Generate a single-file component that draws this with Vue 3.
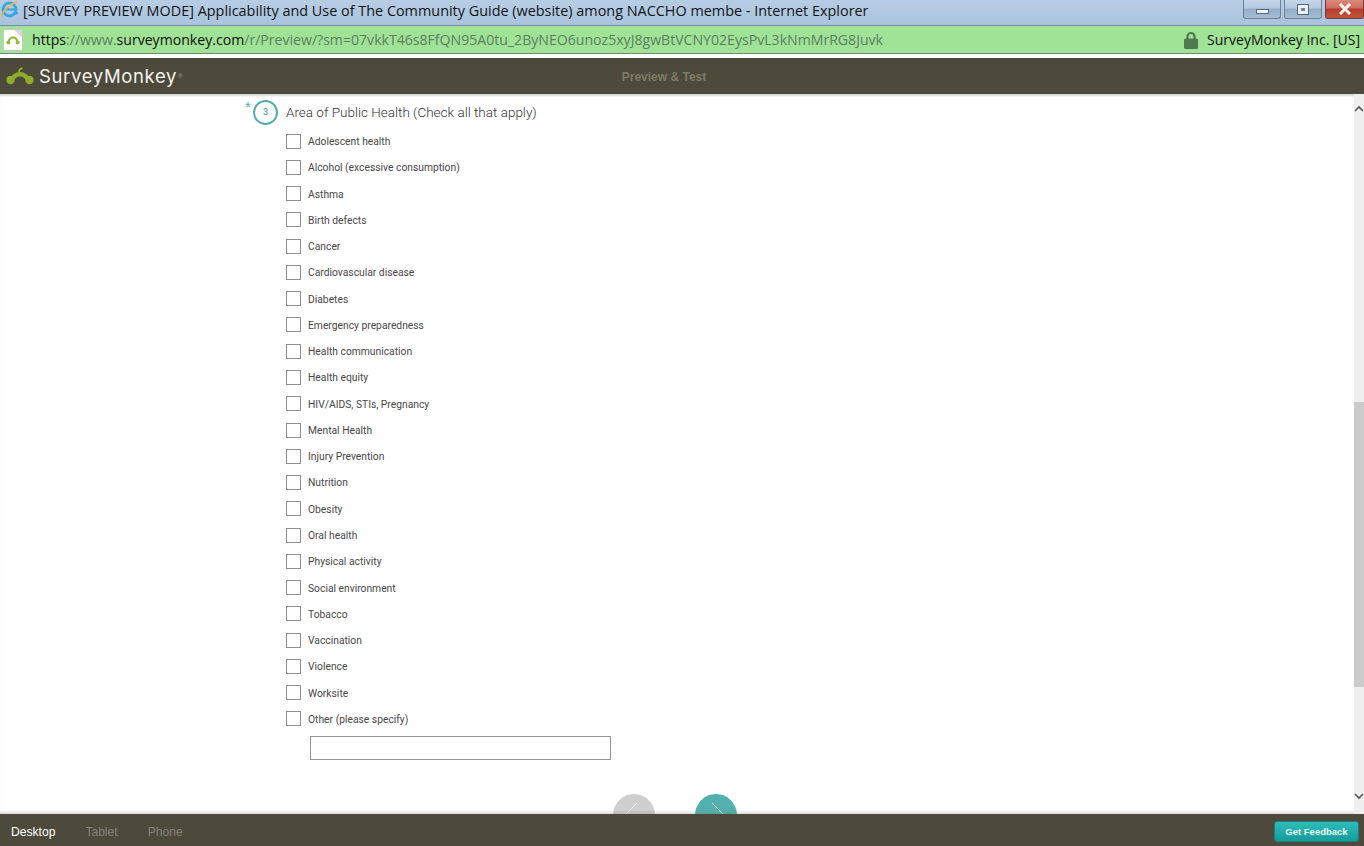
<script setup>
const options = [
  'Adolescent health', 'Alcohol (excessive consumption)', 'Asthma', 'Birth defects', 'Cancer',
  'Cardiovascular disease', 'Diabetes', 'Emergency preparedness', 'Health communication', 'Health equity',
  'HIV/AIDS, STIs, Pregnancy', 'Mental Health', 'Injury Prevention', 'Nutrition', 'Obesity', 'Oral health',
  'Physical activity', 'Social environment', 'Tobacco', 'Vaccination', 'Violence', 'Worksite', 'Other (please specify)'
]
</script>

<template>
  <div class="window">
    <div class="titlebar">
      <svg class="ie" width="19" height="19" viewBox="0 0 20 20">
        <circle cx="10" cy="10" r="6.800" fill="none" stroke="#3aa6e6" stroke-width="3"/>
        <path d="M5 10h11" stroke="#3aa6e6" stroke-width="2.400"/>
        <path d="M1 18c2-6 9-14 17-16" fill="none" stroke="#f0b83a" stroke-width="1.600"/>
        <path d="M15 14.500l4-1" stroke="#3aa6e6" stroke-width="2.400"/>
      </svg>
      <span class="title">[SURVEY PREVIEW MODE] Applicability and Use of The Community Guide (website) among NACCHO membe - Internet Explorer</span>
      <div class="controls">
        <div class="ctl"><i class="min"></i></div>
        <div class="ctl"><i class="max"></i></div>
        <div class="ctl close">
          <svg width="14" height="12" viewBox="0 0 14 12"><path d="M2 1l10 10M12 1L2 11" stroke="#f4f1ee" stroke-width="3"/></svg>
        </div>
      </div>
    </div>

    <div class="urlbar">
      <div class="page-icon">
        <svg width="14" height="10" viewBox="0 0 14 10"><path d="M2.500 7.500C3 4 4.800 2.500 7 2.500s4 1.500 4.500 5" fill="none" stroke="#97b83a" stroke-width="2.200"/><circle cx="2.400" cy="7.600" r="2" fill="#97b83a"/><circle cx="11.600" cy="7.600" r="2" fill="#97b83a"/></svg>
      </div>
      <span class="url">https<span class="dim">://www.</span>surveymonkey.com<span class="dim">/r/Preview/?sm=07vkkT46s8FfQN95A0tu_2ByNEO6unoz5xyJ8gwBtVCNY02EysPvL3kNmMrRG8Juvk</span></span>
      <svg class="lock" width="14" height="18" viewBox="0 0 14 18"><path d="M3.500 8V5.500a3.500 3.500 0 0 1 7 0V8" fill="none" stroke="#4f7a4f" stroke-width="2.200"/><rect x="0" y="7.500" width="14" height="10.500" rx="1.500" fill="#4f7a4f"/></svg>
      <span class="owner">SurveyMonkey Inc. [US]</span>
    </div>

    <header class="brandbar">
      <div class="logo">
        <svg width="28" height="18" viewBox="0 0 28 18">
          <path d="M4 14C5 8 9 5 14 5s9 3 10 9h-4c-1-3-3-4.500-6-4.500S9 11 8 14z" fill="#8cae2c"/>
          <circle cx="4.500" cy="13" r="4.200" fill="#8cae2c"/>
          <circle cx="23.500" cy="13" r="4.200" fill="#8cae2c"/>
          <path d="M13 5c0-2 1-3.500 3.500-3.500" fill="none" stroke="#8cae2c" stroke-width="1.800"/>
        </svg>
        <span class="logotext">SurveyMonkey</span><span class="reg">®</span>
      </div>
      <span class="mode">Preview &amp; Test</span>
    </header>

    <div class="viewport">
      <main class="survey">
        <div class="question">
          <span class="req">*</span>
          <span class="num">3</span>
          <h2>Area of Public Health (Check all that apply)</h2>
        </div>
        <ul class="options">
          <li v-for="o in options" :key="o"><span class="box"></span><span>{{ o }}</span></li>
        </ul>
        <div class="other"></div>
        <div class="nav">
          <button class="circle prev"><svg width="42" height="42" viewBox="0 0 42 42"><path d="M24 9L8 25" stroke="#f2f2f2" fill="none"/></svg></button>
          <button class="circle next"><svg width="42" height="42" viewBox="0 0 42 42"><path d="M17 9l16 16" stroke="#f2f2f2" fill="none"/></svg></button>
        </div>
      </main>
      <div class="scrollbar">
        <svg class="arrow up" width="10" height="7" viewBox="0 0 10 7"><path d="M1 6l4-4 4 4" fill="none" stroke="#555" stroke-width="1.600"/></svg>
        <div class="thumb"></div>
        <svg class="arrow down" width="10" height="7" viewBox="0 0 10 7"><path d="M1 1l4 4 4-4" fill="none" stroke="#555" stroke-width="1.600"/></svg>
      </div>
    </div>

    <footer class="devices">
      <span class="tab active">Desktop</span>
      <span class="tab">Tablet</span>
      <span class="tab">Phone</span>
      <button class="feedback">Get Feedback</button>
    </footer>
  </div>
</template>

<style>
html, body { margin: 0; background: #fff; }
</style>

<style scoped>
.window { width: 1364px; height: 846px; overflow: hidden; display: flex; flex-direction: column; background: #fff; }

.titlebar { height: 25px; flex: none; display: flex; align-items: flex-start; background: linear-gradient(#b7cde4, #a9c3de); box-sizing: border-box; }
.ie { flex: none; margin: 0 4px 0 0; }
.title { font: 14.420px/21px "Open Sans", sans-serif; color: #151515; white-space: nowrap; }
.controls { margin-left: auto; display: flex; gap: 3px; }
.ctl { width: 38px; height: 19px; box-sizing: border-box; border: 1px solid #6f7f92; border-top: 0; border-radius: 0 0 3px 3px; background: linear-gradient(#c6d7e9 0, #b5c9de 45%, #93adc9 50%, #a5bcd5 100%); display: flex; align-items: center; justify-content: center; }
.ctl.close { width: 39px; background: linear-gradient(#d98a7c 0, #cf6c5b 45%, #b53d2a 50%, #c0533e 100%); border-color: #7d3a34; }
.min { width: 11px; height: 3px; background: #eef2f6; border: 1px solid #55677c; margin-top: 5px; }
.max { width: 4px; height: 3px; border: 3px solid #eef2f6; outline: 1px solid #55677c; background: #6d87a6; }

.urlbar { height: 29px; flex: none; box-sizing: border-box; display: flex; align-items: center; background: #a0e296; border-top: 1px solid #7c8a9c; border-bottom: 1px solid #6f8a78; }
.page-icon { width: 20px; height: 22px; margin: 0 9px 0 3px; background: linear-gradient(225deg, #d8d8d8 0 5px, #fff 5px); border: 1px solid #c8c8c8; box-sizing: border-box; display: flex; align-items: center; justify-content: center; flex: none; }
.url { font: 14.100px/29px "Open Sans", sans-serif; white-space: nowrap; color: #101010; }
.dim { color: #5c7f62; }
.lock { margin-left: auto; margin-right: 9px; flex: none; }
.owner { font: 14px/29px "Open Sans", sans-serif; color: #101010; margin-right: 4px; white-space: nowrap; }

.brandbar { height: 36px; flex: none; margin-top: 4px; position: relative; display: flex; align-items: center; background: #4d493b; }
.logo { display: flex; align-items: center; padding-left: 6px; }
.logotext { font: 400 18.500px/36px Inter, sans-serif; letter-spacing: .65px; color: #f4f4f0; margin-left: 5px; }
.reg { font: 6px/1 "Liberation Sans", sans-serif; color: #a8a89a; margin-left: 1px; }
.mode { position: absolute; left: 0; right: 36px; top: 1px; text-align: center; font: 700 12px/36px "Liberation Sans", sans-serif; color: #7e7b66; }

.viewport { flex: 1; min-height: 0; display: flex; overflow: hidden; box-shadow: inset 0 3px 2px -1px #d6d6d6; }
.survey { flex: 1; min-width: 0; padding: 6px 0 0 286px; position: relative; overflow: hidden; box-sizing: border-box; }
.survey::after { content: ""; position: absolute; left: 0; right: 0; bottom: 0; height: 4px; background: linear-gradient(transparent, rgba(120,120,120,.28)); pointer-events: none; }

.question { position: relative; height: 24px; display: flex; align-items: center; }
.req { position: absolute; left: -41px; top: -1px; font: 15px/15px "Liberation Sans", sans-serif; color: #52adab; }
.num { position: absolute; left: -33px; top: 0; width: 25px; height: 25px; box-sizing: border-box; border: 2px solid #52adab; border-radius: 50%; font: 500 9px/21px Roboto, sans-serif; color: #52adab; text-align: center; }
h2 { margin: 0; font: 300 13.500px/24px Roboto, sans-serif; color: #333; white-space: nowrap; }

.options { list-style: none; margin: 5px 0 0; padding: 0; font: 400 10.300px/26.270px Roboto, sans-serif; color: #484848; }
.options li { height: 26.270px; display: flex; align-items: center; }
.box { width: 13px; height: 13px; border: 1px solid #8e8e8e; background: #fff; margin: 0 7px 2px 0; flex: none; }

.other { width: 301px; height: 24px; box-sizing: border-box; border: 1px solid #959595; margin: 3px 0 0 24px; background: #fff; }

.nav { display: flex; gap: 40px; margin: 34px 0 0 327px; }
.circle { width: 42px; height: 42px; border: 0; padding: 0; border-radius: 50%; flex: none; }
.circle svg { display: block; }
.prev { background: #cfcfcf; }
.next { background: #52b1ae; }

.scrollbar { width: 10px; flex: none; background: #efefef; position: relative; }
.thumb { position: absolute; left: 0; right: 0; top: 308px; height: 285px; background: #cbcbcb; }
.arrow { position: absolute; left: 0; }
.arrow.up { top: 11px; }
.arrow.down { top: 699px; }

.devices { height: 32px; flex: none; display: flex; align-items: center; background: #4d493b; font: 12.100px/30px "Liberation Sans", sans-serif; color: #85837a; padding: 2px 0 0 11px; box-sizing: border-box; gap: 30px; }
.tab { margin-top: 2px; }
.active { color: #fff; }
.feedback { margin-left: auto; margin-right: 5px; width: 85px; height: 21px; border: 1px solid #15807f; border-radius: 3px; padding: 0; background: linear-gradient(#2fbcb8, #149d9a); color: #e9f7f6; font: 700 9.500px/19px "Liberation Sans", sans-serif; }
</style>
